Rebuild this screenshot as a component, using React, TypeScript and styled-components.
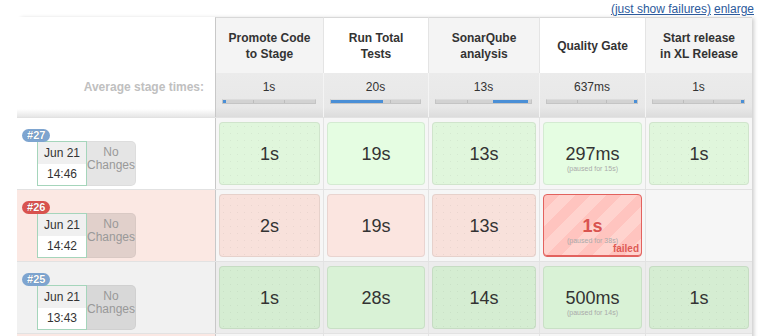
import React from 'react';
import styled, { createGlobalStyle, css } from 'styled-components';

const GlobalStyle = createGlobalStyle`
  html, body {
    margin: 0;
    padding: 0;
    background: #fff;
  }
  body {
    font-family: 'Liberation Sans', Arial, sans-serif;
    color: #333;
    overflow: hidden;
  }
`;

// left build column + the five stage columns
const COLS = '198px 108px 105px 111px 106px 107px';

type Tone = 'white' | 'pink' | 'gray';

const rowBg: Record<Tone, string> = {
  white: '#fff',
  pink: '#fbe8e3',
  gray: '#f1f1f1'
};

const TopLinks = styled.div`
  box-sizing: border-box;
  height: 17px;
  padding: 2px 9px 0 0;
  display: flex;
  justify-content: flex-end;
  gap: 3px;
  font-size: 12px;
  line-height: 14px;
`;

const Link = styled.a`
  color: #2c5a9c;
  text-decoration: underline;
  cursor: pointer;
`;

const Board = styled.div`
  margin-left: 17px;
  width: 735px;
  box-shadow: 3px 0 4px -1px rgba(0, 0, 0, 0.2);
`;

const HeadRow = styled.div`
  display: grid;
  grid-template-columns: ${COLS};
  height: 56px;
`;

const Blank = styled.div`
  background: #fff;
`;

const HeadCell = styled.div<{ $shade: boolean }>`
  display: flex;
  align-items: center;
  justify-content: center;
  text-align: center;
  padding: 0 10px;
  font-size: 12px;
  font-weight: bold;
  line-height: 16px;
  color: #333;
  background: ${p => (p.$shade ? '#f4f4f4' : '#fff')};
  border-top: 1px solid #d8d8d8;
  border-left: 1px solid #e4e4e4;
  &:nth-child(2) {
    border-left-color: #c8c8c8;
  }
`;

const AvgRow = styled.div`
  display: grid;
  grid-template-columns: ${COLS};
  height: 44px;
`;

const AvgLabel = styled.div`
  text-align: right;
  padding: 7px 11px 0 0;
  font-size: 12px;
  font-weight: bold;
  line-height: 14px;
  color: #c0c0c0;
  background: linear-gradient(to bottom, #fff 0, #fff 36px, #e6e6e6 44px);
`;

const AvgCell = styled.div`
  box-sizing: border-box;
  padding: 7px 7px 0 6px;
  background: linear-gradient(to bottom, #ebebeb 0, #e8e8e8 34px, #dcdcdc 44px);
  border-left: 1px solid #f4f4f4;
  text-align: center;
  font-size: 12px;
  line-height: 14px;
  color: #333;
  &:nth-child(2) {
    border-left-color: #c8c8c8;
  }
`;

const Track = styled.div`
  margin-top: 5px;
  height: 3px;
  background: linear-gradient(to right, #d2d2d2 33%, #bcbcbc 33%, #bcbcbc 34%, #d2d2d2 34%, #d2d2d2 66%, #bcbcbc 66%, #bcbcbc 67%, #d2d2d2 67%);
  border: 1px solid #c4c4c4;
  border-top-color: #dcdcdc;
`;

const Fill = styled.div`
  height: 3px;
  background: #4a8fd6;
`;

const BuildRow = styled.div<{ $tone: Tone }>`
  box-sizing: border-box;
  display: grid;
  grid-template-columns: ${COLS};
  height: 72px;
  background: ${p => rowBg[p.$tone]};
  border-top: 1px solid #e2e2e2;
`;

const BuildInfo = styled.div`
  padding: 7px 0 0 5px;
`;

const Badge = styled.span<{ $failed: boolean }>`
  position: relative;
  z-index: 1;
  display: inline-block;
  height: 13px;
  padding: 0 5px;
  border-radius: 7px;
  background: ${p => (p.$failed ? '#d9534f' : '#7ea5d0')};
  color: #fff;
  font-size: 11px;
  font-weight: bold;
  line-height: 13px;
  text-shadow: 0 0 1px rgba(0, 0, 0, 0.3);
`;

const DateAndChanges = styled.div`
  display: flex;
  margin: -2px 0 0 15px;
`;

const DateBox = styled.div`
  box-sizing: border-box;
  width: 50px;
  height: 45px;
  display: flex;
  flex-direction: column;
  border: 1px solid #a5d5bb;
  font-size: 12px;
  color: #333;
`;

const DateHalf = styled.div<{ $top?: boolean }>`
  flex: 1;
  display: flex;
  align-items: center;
  justify-content: center;
  background: ${p => (p.$top ? '#f0f0f0' : '#fff')};
`;

const NoChanges = styled.div`
  box-sizing: border-box;
  width: 49px;
  height: 45px;
  padding-top: 4px;
  border-radius: 0 5px 5px 0;
  border: 1px solid rgba(0, 0, 0, 0.04);
  border-left: 0;
  background: rgba(0, 0, 0, 0.1);
  color: #999;
  font-size: 12px;
  line-height: 13px;
  text-align: center;
`;

const StageCol = styled.div<{ $tone: Tone }>`
  box-sizing: border-box;
  padding: 4px 3px;
  background: ${p => (p.$tone === 'gray' ? '#ececec' : '#f6f6f6')};
  border-left: 1px solid #e3e3e3;
  &:nth-child(2) {
    border-left-color: #c8c8c8;
  }
`;

type Kind = 'ok' | 'okDark' | 'warn' | 'failed';

const boxBg: Record<Kind, string> = {
  ok: '#e0f6dc',
  okDark: '#d5edd2',
  warn: '#f8e1db',
  failed: '#ffcbc6'
};

const dots = css`
  background-image: radial-gradient(rgba(0, 0, 0, 0.05) 0.6px, transparent 1px);
  background-size: 7px 7px;
`;

const StageBox = styled.div<{ $kind: Kind; $alt: boolean }>`
  position: relative;
  box-sizing: border-box;
  height: 100%;
  display: flex;
  flex-direction: column;
  align-items: center;
  justify-content: center;
  border-radius: 4px;
  border: 1px solid rgba(0, 0, 0, 0.07);
  background-color: ${p => boxBg[p.$kind]};
  ${p =>
    p.$kind === 'failed'
      ? css`
          border-color: #e2625e;
          box-shadow: inset 0 -1px 0 #e2625e;
          background-image: repeating-linear-gradient(
            135deg,
            #ffc4bf 0,
            #ffc4bf 11px,
            #ffd3ce 11px,
            #ffd3ce 22px
          );
        `
      : dots}
  ${p =>
    p.$alt &&
    p.$kind !== 'failed' &&
    css`
      background-color: ${p.$kind === 'ok' ? '#e5fde2' : p.$kind === 'okDark' ? '#d9f2d6' : '#fbe5e0'};
      background-image: none;
    `}
`;

const Duration = styled.div<{ $failed?: boolean }>`
  font-size: 18px;
  line-height: 20px;
  color: ${p => (p.$failed ? '#d9534f' : '#333')};
  font-weight: ${p => (p.$failed ? 'bold' : 'normal')};
`;

const Paused = styled.div`
  font-size: 7px;
  line-height: 9px;
  margin-bottom: -9px;
  color: #aaa;
`;

const FailedTag = styled.span`
  position: absolute;
  right: 2px;
  bottom: 2px;
  font-size: 10px;
  font-weight: bold;
  color: #de5a55;
`;

type Stage = { time: string; paused?: string; failed?: boolean } | null;

type Build = {
  id: number;
  tone: Tone;
  failed: boolean;
  date: string;
  time: string;
  stages: Stage[];
};

const stageNames = [
  ['Promote Code', 'to Stage'],
  ['Run Total', 'Tests'],
  ['SonarQube', 'analysis'],
  ['Quality Gate'],
  ['Start release', 'in XL Release']
];

const averages = [
  { time: '1s', from: 0, width: 3 },
  { time: '20s', from: 0, width: 58 },
  { time: '13s', from: 60, width: 37 },
  { time: '637ms', from: 97, width: 3 },
  { time: '1s', from: 97, width: 3 }
];

const builds: Build[] = [
  {
    id: 27,
    tone: 'white',
    failed: false,
    date: 'Jun 21',
    time: '14:46',
    stages: [{ time: '1s' }, { time: '19s' }, { time: '13s' }, { time: '297ms', paused: '15s' }, { time: '1s' }]
  },
  {
    id: 26,
    tone: 'pink',
    failed: true,
    date: 'Jun 21',
    time: '14:42',
    stages: [{ time: '2s' }, { time: '19s' }, { time: '13s' }, { time: '1s', paused: '38s', failed: true }, null]
  },
  {
    id: 25,
    tone: 'gray',
    failed: false,
    date: 'Jun 21',
    time: '13:43',
    stages: [{ time: '1s' }, { time: '28s' }, { time: '14s' }, { time: '500ms', paused: '14s' }, { time: '1s' }]
  }
];

function kindFor(build: Build, stage: NonNullable<Stage>): Kind {
  if (stage.failed) return 'failed';
  if (build.failed) return 'warn';
  return build.tone === 'gray' ? 'okDark' : 'ok';
}

function BuildLine({ build }: { build: Build }) {
  return (
    <BuildRow $tone={build.tone}>
      <BuildInfo>
        <Badge $failed={build.failed}>#{build.id}</Badge>
        <DateAndChanges>
          <DateBox>
            <DateHalf $top>{build.date}</DateHalf>
            <DateHalf>{build.time}</DateHalf>
          </DateBox>
          <NoChanges>
            No
            <br />
            Changes
          </NoChanges>
        </DateAndChanges>
      </BuildInfo>
      {build.stages.map((stage, i) => (
        <StageCol key={i} $tone={build.tone}>
          {stage && (
            <StageBox $kind={kindFor(build, stage)} $alt={i % 2 === 1}>
              <Duration $failed={stage.failed}>{stage.time}</Duration>
              {stage.paused && <Paused>(paused for {stage.paused})</Paused>}
              {stage.failed && <FailedTag>failed</FailedTag>}
            </StageBox>
          )}
        </StageCol>
      ))}
    </BuildRow>
  );
}

// next (older) run, only its top edge shows below the fold
function TailRow() {
  return (
    <BuildRow $tone="pink">
      <BuildInfo />
      {[0, 1, 2, 3, 4].map(i => (
        <StageCol key={i} $tone="pink">
          <StageBox $kind={i === 3 ? 'failed' : 'warn'} $alt={i % 2 === 1} />
        </StageCol>
      ))}
    </BuildRow>
  );
}

export default function App() {
  return (
    <>
      <GlobalStyle />
      <TopLinks>
        <Link>(just show failures)</Link>
        <Link>enlarge</Link>
      </TopLinks>
      <Board>
        <HeadRow>
          <Blank />
          {stageNames.map((lines, i) => (
            <HeadCell key={i} $shade={i % 2 === 0}>
              <div>
                {lines.map((l, j) => (
                  <div key={j}>{l}</div>
                ))}
              </div>
            </HeadCell>
          ))}
        </HeadRow>
        <AvgRow>
          <AvgLabel>Average stage times:</AvgLabel>
          {averages.map((a, i) => (
            <AvgCell key={i}>
              {a.time}
              <Track>
                <Fill style={{ marginLeft: `${a.from}%`, width: `${a.width}%` }} />
              </Track>
            </AvgCell>
          ))}
        </AvgRow>
        {builds.map(b => (
          <BuildLine key={b.id} build={b} />
        ))}
        <TailRow />
      </Board>
    </>
  );
}
